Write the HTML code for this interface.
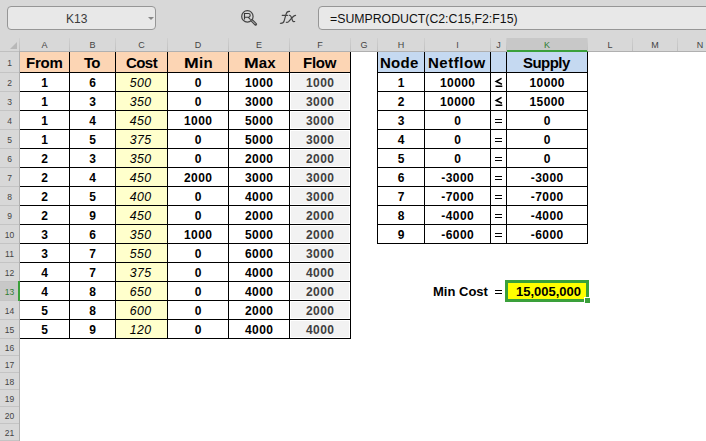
<!DOCTYPE html><html><head><meta charset="utf-8"><style>
*{margin:0;padding:0}
html,body{width:706px;height:441px;overflow:hidden;background:#fff}
body{position:relative;font-family:"Liberation Sans",sans-serif}
.a{position:absolute;text-align:center;white-space:nowrap}
.t{position:absolute;height:40px;line-height:40px;white-space:nowrap}
.dt,.it,.out{text-align:center;font-size:12px;letter-spacing:0.4px;text-indent:0.4px}
.dt{font-weight:bold;color:#000}
.it{font-style:italic;color:#000;font-size:12.3px;text-indent:-1.6px}
.out{font-weight:bold;color:#3f3f3f}
</style></head><body>
<div class="a" style="left:0;top:0;width:706px;height:52px;background:#d8d8d8"></div>
<div class="a" style="left:7px;top:6px;width:147px;height:22px;border:1px solid #969696;border-radius:4px;background:#e8e8e8"></div>
<div class="t" style="left:66px;top:-1px;font-size:12px;color:#3a3a3a">K13</div>
<div class="a" style="left:148px;top:17px;width:0;height:0;border-left:3px solid transparent;border-right:3px solid transparent;border-top:3px solid #888"></div>
<svg class="a" style="left:238px;top:7px" width="22" height="22" viewBox="0 0 22 22"><circle cx="9.4" cy="9.4" r="5.7" fill="none" stroke="#444" stroke-width="1.2"/><path d="M6.5 12.6 V6.5 H10.5 C11.7 6.5 12.2 7.3 12.2 8.3 C12.2 9.4 11.6 10.2 10.5 10.2 H6.5 M10 10.2 L12.6 12.6" fill="none" stroke="#383838" stroke-width="1.15"/><path d="M13.9 13.5 L17.6 17.2" stroke="#444" stroke-width="2.9" stroke-linecap="round"/><path d="M14.2 13.8 L17.3 16.9" stroke="#d0d0d0" stroke-width="0.9" stroke-linecap="round"/></svg>
<svg class="a" style="left:276px;top:8px" width="24" height="18" viewBox="0 0 24 18"><g fill="none" stroke="#444" stroke-width="1.15" stroke-linecap="round"><path d="M13.6 3.4 C11.4 3.1 10.5 4.3 10.0 6.3 L8.1 13.0 C7.6 14.8 6.6 15.4 4.4 15.3"/><path d="M6.2 7.3 H11.5"/><path d="M13.2 7.3 C14.3 7.2 14.7 7.7 15.1 8.8 L16.6 12.8 C17.0 13.7 17.6 13.8 18.7 13.5"/><path d="M19.6 7.3 C18.5 7.3 17.6 8.0 16.3 9.5 L12.6 13.6 C12.0 14.2 11.2 14.4 10.3 14.3"/></g></svg>
<div class="a" style="left:318px;top:6px;width:400px;height:22px;border:1px solid #969696;border-radius:4px;background:#e8e8e8"></div>
<div class="t" style="left:330px;top:-1px;font-size:12.3px;color:#111">=SUMPRODUCT(C2:C15,F2:F15)</div>
<div class="a" style="left:0;top:51px;width:19px;height:1px;background:#c0c0c0"></div>
<div class="a" style="left:19px;top:51px;width:687px;height:1px;background:#b0b0b0"></div>
<div class="a" style="left:0;top:52px;width:19px;height:389px;background:#d8d8d8"></div>
<div class="a" style="left:19px;top:38px;width:1px;height:13px;background:linear-gradient(#d0d0d0,#bcbcbc)"></div>
<div class="a" style="left:19px;top:51px;width:1px;height:390px;background:#b0b0b0"></div>
<svg class="a" style="left:9px;top:41px" width="9" height="9"><path d="M8 1 L8 8 L1 8 Z" fill="#b8b8b8"/></svg>
<div class="a" style="left:507px;top:38px;width:81px;height:12px;background:#c8c8c8"></div>
<div class="a" style="left:507px;top:50px;width:81px;height:2px;background:#3aa03a"></div>
<div class="a" style="left:69px;top:38px;width:1px;height:13px;background:linear-gradient(#d0d0d0,#c0c0c0)"></div>
<div class="a" style="left:20px;top:39px;width:49px;height:13px;line-height:13px;text-align:center;font-size:9px;color:#444">A</div>
<div class="a" style="left:115px;top:38px;width:1px;height:13px;background:linear-gradient(#d0d0d0,#c0c0c0)"></div>
<div class="a" style="left:70px;top:39px;width:45px;height:13px;line-height:13px;text-align:center;font-size:9px;color:#444">B</div>
<div class="a" style="left:167px;top:38px;width:1px;height:13px;background:linear-gradient(#d0d0d0,#c0c0c0)"></div>
<div class="a" style="left:116px;top:39px;width:51px;height:13px;line-height:13px;text-align:center;font-size:9px;color:#444">C</div>
<div class="a" style="left:228px;top:38px;width:1px;height:13px;background:linear-gradient(#d0d0d0,#c0c0c0)"></div>
<div class="a" style="left:168px;top:39px;width:60px;height:13px;line-height:13px;text-align:center;font-size:9px;color:#444">D</div>
<div class="a" style="left:289px;top:38px;width:1px;height:13px;background:linear-gradient(#d0d0d0,#c0c0c0)"></div>
<div class="a" style="left:229px;top:39px;width:60px;height:13px;line-height:13px;text-align:center;font-size:9px;color:#444">E</div>
<div class="a" style="left:350px;top:38px;width:1px;height:13px;background:linear-gradient(#d0d0d0,#c0c0c0)"></div>
<div class="a" style="left:290px;top:39px;width:60px;height:13px;line-height:13px;text-align:center;font-size:9px;color:#444">F</div>
<div class="a" style="left:377px;top:38px;width:1px;height:13px;background:linear-gradient(#d0d0d0,#c0c0c0)"></div>
<div class="a" style="left:351px;top:39px;width:26px;height:13px;line-height:13px;text-align:center;font-size:9px;color:#444">G</div>
<div class="a" style="left:424px;top:38px;width:1px;height:13px;background:linear-gradient(#d0d0d0,#c0c0c0)"></div>
<div class="a" style="left:378px;top:39px;width:46px;height:13px;line-height:13px;text-align:center;font-size:9px;color:#444">H</div>
<div class="a" style="left:490px;top:38px;width:1px;height:13px;background:linear-gradient(#d0d0d0,#c0c0c0)"></div>
<div class="a" style="left:425px;top:39px;width:65px;height:13px;line-height:13px;text-align:center;font-size:9px;color:#444">I</div>
<div class="a" style="left:506px;top:38px;width:1px;height:13px;background:linear-gradient(#d0d0d0,#c0c0c0)"></div>
<div class="a" style="left:491px;top:39px;width:15px;height:13px;line-height:13px;text-align:center;font-size:9px;color:#444">J</div>
<div class="a" style="left:587px;top:38px;width:1px;height:13px;background:linear-gradient(#d0d0d0,#c0c0c0)"></div>
<div class="a" style="left:507px;top:39px;width:80px;height:13px;line-height:13px;text-align:center;font-size:9px;color:#2f7d32">K</div>
<div class="a" style="left:632px;top:38px;width:1px;height:13px;background:linear-gradient(#d0d0d0,#c0c0c0)"></div>
<div class="a" style="left:588px;top:39px;width:44px;height:13px;line-height:13px;text-align:center;font-size:9px;color:#444">L</div>
<div class="a" style="left:677px;top:38px;width:1px;height:13px;background:linear-gradient(#d0d0d0,#c0c0c0)"></div>
<div class="a" style="left:633px;top:39px;width:44px;height:13px;line-height:13px;text-align:center;font-size:9px;color:#444">M</div>
<div class="a" style="left:722px;top:38px;width:1px;height:13px;background:linear-gradient(#d0d0d0,#c0c0c0)"></div>
<div class="a" style="left:678px;top:39px;width:44px;height:13px;line-height:13px;text-align:center;font-size:9px;color:#444">N</div>
<div class="a" style="left:0;top:72px;width:19px;height:1px;background:#c4c4c4"></div>
<div class="a" style="left:0;top:53px;width:19px;height:21px;line-height:21px;text-align:center;font-size:8.5px;color:#444">1</div>
<div class="a" style="left:0;top:91px;width:19px;height:1px;background:#c4c4c4"></div>
<div class="a" style="left:0;top:74px;width:19px;height:19px;line-height:19px;text-align:center;font-size:8.5px;color:#444">2</div>
<div class="a" style="left:0;top:110px;width:19px;height:1px;background:#c4c4c4"></div>
<div class="a" style="left:0;top:93px;width:19px;height:19px;line-height:19px;text-align:center;font-size:8.5px;color:#444">3</div>
<div class="a" style="left:0;top:129px;width:19px;height:1px;background:#c4c4c4"></div>
<div class="a" style="left:0;top:112px;width:19px;height:19px;line-height:19px;text-align:center;font-size:8.5px;color:#444">4</div>
<div class="a" style="left:0;top:148px;width:19px;height:1px;background:#c4c4c4"></div>
<div class="a" style="left:0;top:131px;width:19px;height:19px;line-height:19px;text-align:center;font-size:8.5px;color:#444">5</div>
<div class="a" style="left:0;top:167px;width:19px;height:1px;background:#c4c4c4"></div>
<div class="a" style="left:0;top:150px;width:19px;height:19px;line-height:19px;text-align:center;font-size:8.5px;color:#444">6</div>
<div class="a" style="left:0;top:186px;width:19px;height:1px;background:#c4c4c4"></div>
<div class="a" style="left:0;top:169px;width:19px;height:19px;line-height:19px;text-align:center;font-size:8.5px;color:#444">7</div>
<div class="a" style="left:0;top:205px;width:19px;height:1px;background:#c4c4c4"></div>
<div class="a" style="left:0;top:188px;width:19px;height:19px;line-height:19px;text-align:center;font-size:8.5px;color:#444">8</div>
<div class="a" style="left:0;top:224px;width:19px;height:1px;background:#c4c4c4"></div>
<div class="a" style="left:0;top:207px;width:19px;height:19px;line-height:19px;text-align:center;font-size:8.5px;color:#444">9</div>
<div class="a" style="left:0;top:243px;width:19px;height:1px;background:#c4c4c4"></div>
<div class="a" style="left:0;top:226px;width:19px;height:19px;line-height:19px;text-align:center;font-size:8.5px;color:#444">10</div>
<div class="a" style="left:0;top:262px;width:19px;height:1px;background:#c4c4c4"></div>
<div class="a" style="left:0;top:245px;width:19px;height:19px;line-height:19px;text-align:center;font-size:8.5px;color:#444">11</div>
<div class="a" style="left:0;top:281px;width:19px;height:1px;background:#c4c4c4"></div>
<div class="a" style="left:0;top:264px;width:19px;height:19px;line-height:19px;text-align:center;font-size:8.5px;color:#444">12</div>
<div class="a" style="left:0;top:300px;width:19px;height:1px;background:#c4c4c4"></div>
<div class="a" style="left:0;top:282px;width:19px;height:18px;background:#c8c8c8"></div>
<div class="a" style="left:18px;top:281px;width:2px;height:20px;background:#3aa03a"></div>
<div class="a" style="left:0;top:283px;width:19px;height:19px;line-height:19px;text-align:center;font-size:8.5px;color:#2f7d32">13</div>
<div class="a" style="left:0;top:319px;width:19px;height:1px;background:#c4c4c4"></div>
<div class="a" style="left:0;top:302px;width:19px;height:19px;line-height:19px;text-align:center;font-size:8.5px;color:#444">14</div>
<div class="a" style="left:0;top:338px;width:19px;height:1px;background:#c4c4c4"></div>
<div class="a" style="left:0;top:321px;width:19px;height:19px;line-height:19px;text-align:center;font-size:8.5px;color:#444">15</div>
<div class="a" style="left:0;top:355px;width:19px;height:1px;background:#c4c4c4"></div>
<div class="a" style="left:0;top:340px;width:19px;height:17px;line-height:17px;text-align:center;font-size:8.5px;color:#444">16</div>
<div class="a" style="left:0;top:372px;width:19px;height:1px;background:#c4c4c4"></div>
<div class="a" style="left:0;top:357px;width:19px;height:17px;line-height:17px;text-align:center;font-size:8.5px;color:#444">17</div>
<div class="a" style="left:0;top:389px;width:19px;height:1px;background:#c4c4c4"></div>
<div class="a" style="left:0;top:374px;width:19px;height:17px;line-height:17px;text-align:center;font-size:8.5px;color:#444">18</div>
<div class="a" style="left:0;top:406px;width:19px;height:1px;background:#c4c4c4"></div>
<div class="a" style="left:0;top:391px;width:19px;height:17px;line-height:17px;text-align:center;font-size:8.5px;color:#444">19</div>
<div class="a" style="left:0;top:423px;width:19px;height:1px;background:#c4c4c4"></div>
<div class="a" style="left:0;top:408px;width:19px;height:17px;line-height:17px;text-align:center;font-size:8.5px;color:#444">20</div>
<div class="a" style="left:0;top:440px;width:19px;height:1px;background:#c4c4c4"></div>
<div class="a" style="left:0;top:425px;width:19px;height:17px;line-height:17px;text-align:center;font-size:8.5px;color:#444">21</div>
<div class="a" style="left:0;top:457px;width:19px;height:1px;background:#c4c4c4"></div>
<div class="a" style="left:0;top:442px;width:19px;height:17px;line-height:17px;text-align:center;font-size:8.5px;color:#444">22</div>
<div class="a" style="left:20px;top:52px;width:49px;height:20px;background:#fcd5b4"></div>
<div class="t" style="left:26px;top:43px;font-size:15px;font-weight:bold;letter-spacing:-0.20px;color:#000">From</div>
<div class="a" style="left:70px;top:52px;width:45px;height:20px;background:#fcd5b4"></div>
<div class="t" style="left:84px;top:43px;font-size:15px;font-weight:bold;letter-spacing:-0.70px;color:#000">To</div>
<div class="a" style="left:116px;top:52px;width:51px;height:20px;background:#fcd5b4"></div>
<div class="t" style="left:126px;top:43px;font-size:15px;font-weight:bold;letter-spacing:-0.57px;color:#000">Cost</div>
<div class="a" style="left:168px;top:52px;width:60px;height:20px;background:#fcd5b4"></div>
<div class="t" style="left:184px;top:43px;font-size:15px;font-weight:bold;letter-spacing:0.45px;color:#000"><span style="display:inline-block;transform:scaleX(1.18);transform-origin:0 0;margin-right:2px">M</span>in</div>
<div class="a" style="left:229px;top:52px;width:60px;height:20px;background:#fcd5b4"></div>
<div class="t" style="left:244px;top:43px;font-size:15px;font-weight:bold;letter-spacing:0.15px;color:#000"><span style="display:inline-block;transform:scaleX(1.18);transform-origin:0 0;margin-right:2px">M</span>ax</div>
<div class="a" style="left:290px;top:52px;width:60px;height:20px;background:#fcd5b4"></div>
<div class="t" style="left:303px;top:43px;font-size:15px;font-weight:bold;letter-spacing:-0.23px;color:#000">Flow</div>
<div class="t dt" style="left:20px;top:63px;width:49px">1</div>
<div class="t dt" style="left:70px;top:63px;width:45px">6</div>
<div class="a" style="left:116px;top:73px;width:51px;height:18px;background:#ffffcc"></div>
<div class="t it" style="left:116px;top:63px;width:51px">500</div>
<div class="t dt" style="left:168px;top:63px;width:60px">0</div>
<div class="t dt" style="left:229px;top:63px;width:60px">1000</div>
<div class="a" style="left:291px;top:74px;width:58px;height:16px;background:#f2f2f2"></div>
<div class="t out" style="left:290px;top:63px;width:60px">1000</div>
<div class="t dt" style="left:20px;top:82px;width:49px">1</div>
<div class="t dt" style="left:70px;top:82px;width:45px">3</div>
<div class="a" style="left:116px;top:92px;width:51px;height:18px;background:#ffffcc"></div>
<div class="t it" style="left:116px;top:82px;width:51px">350</div>
<div class="t dt" style="left:168px;top:82px;width:60px">0</div>
<div class="t dt" style="left:229px;top:82px;width:60px">3000</div>
<div class="a" style="left:291px;top:93px;width:58px;height:16px;background:#f2f2f2"></div>
<div class="t out" style="left:290px;top:82px;width:60px">3000</div>
<div class="t dt" style="left:20px;top:101px;width:49px">1</div>
<div class="t dt" style="left:70px;top:101px;width:45px">4</div>
<div class="a" style="left:116px;top:111px;width:51px;height:18px;background:#ffffcc"></div>
<div class="t it" style="left:116px;top:101px;width:51px">450</div>
<div class="t dt" style="left:168px;top:101px;width:60px">1000</div>
<div class="t dt" style="left:229px;top:101px;width:60px">5000</div>
<div class="a" style="left:291px;top:112px;width:58px;height:16px;background:#f2f2f2"></div>
<div class="t out" style="left:290px;top:101px;width:60px">3000</div>
<div class="t dt" style="left:20px;top:120px;width:49px">1</div>
<div class="t dt" style="left:70px;top:120px;width:45px">5</div>
<div class="a" style="left:116px;top:130px;width:51px;height:18px;background:#ffffcc"></div>
<div class="t it" style="left:116px;top:120px;width:51px">375</div>
<div class="t dt" style="left:168px;top:120px;width:60px">0</div>
<div class="t dt" style="left:229px;top:120px;width:60px">5000</div>
<div class="a" style="left:291px;top:131px;width:58px;height:16px;background:#f2f2f2"></div>
<div class="t out" style="left:290px;top:120px;width:60px">3000</div>
<div class="t dt" style="left:20px;top:139px;width:49px">2</div>
<div class="t dt" style="left:70px;top:139px;width:45px">3</div>
<div class="a" style="left:116px;top:149px;width:51px;height:18px;background:#ffffcc"></div>
<div class="t it" style="left:116px;top:139px;width:51px">350</div>
<div class="t dt" style="left:168px;top:139px;width:60px">0</div>
<div class="t dt" style="left:229px;top:139px;width:60px">2000</div>
<div class="a" style="left:291px;top:150px;width:58px;height:16px;background:#f2f2f2"></div>
<div class="t out" style="left:290px;top:139px;width:60px">2000</div>
<div class="t dt" style="left:20px;top:158px;width:49px">2</div>
<div class="t dt" style="left:70px;top:158px;width:45px">4</div>
<div class="a" style="left:116px;top:168px;width:51px;height:18px;background:#ffffcc"></div>
<div class="t it" style="left:116px;top:158px;width:51px">450</div>
<div class="t dt" style="left:168px;top:158px;width:60px">2000</div>
<div class="t dt" style="left:229px;top:158px;width:60px">3000</div>
<div class="a" style="left:291px;top:169px;width:58px;height:16px;background:#f2f2f2"></div>
<div class="t out" style="left:290px;top:158px;width:60px">3000</div>
<div class="t dt" style="left:20px;top:177px;width:49px">2</div>
<div class="t dt" style="left:70px;top:177px;width:45px">5</div>
<div class="a" style="left:116px;top:187px;width:51px;height:18px;background:#ffffcc"></div>
<div class="t it" style="left:116px;top:177px;width:51px">400</div>
<div class="t dt" style="left:168px;top:177px;width:60px">0</div>
<div class="t dt" style="left:229px;top:177px;width:60px">4000</div>
<div class="a" style="left:291px;top:188px;width:58px;height:16px;background:#f2f2f2"></div>
<div class="t out" style="left:290px;top:177px;width:60px">3000</div>
<div class="t dt" style="left:20px;top:196px;width:49px">2</div>
<div class="t dt" style="left:70px;top:196px;width:45px">9</div>
<div class="a" style="left:116px;top:206px;width:51px;height:18px;background:#ffffcc"></div>
<div class="t it" style="left:116px;top:196px;width:51px">450</div>
<div class="t dt" style="left:168px;top:196px;width:60px">0</div>
<div class="t dt" style="left:229px;top:196px;width:60px">2000</div>
<div class="a" style="left:291px;top:207px;width:58px;height:16px;background:#f2f2f2"></div>
<div class="t out" style="left:290px;top:196px;width:60px">2000</div>
<div class="t dt" style="left:20px;top:215px;width:49px">3</div>
<div class="t dt" style="left:70px;top:215px;width:45px">6</div>
<div class="a" style="left:116px;top:225px;width:51px;height:18px;background:#ffffcc"></div>
<div class="t it" style="left:116px;top:215px;width:51px">350</div>
<div class="t dt" style="left:168px;top:215px;width:60px">1000</div>
<div class="t dt" style="left:229px;top:215px;width:60px">5000</div>
<div class="a" style="left:291px;top:226px;width:58px;height:16px;background:#f2f2f2"></div>
<div class="t out" style="left:290px;top:215px;width:60px">2000</div>
<div class="t dt" style="left:20px;top:234px;width:49px">3</div>
<div class="t dt" style="left:70px;top:234px;width:45px">7</div>
<div class="a" style="left:116px;top:244px;width:51px;height:18px;background:#ffffcc"></div>
<div class="t it" style="left:116px;top:234px;width:51px">550</div>
<div class="t dt" style="left:168px;top:234px;width:60px">0</div>
<div class="t dt" style="left:229px;top:234px;width:60px">6000</div>
<div class="a" style="left:291px;top:245px;width:58px;height:16px;background:#f2f2f2"></div>
<div class="t out" style="left:290px;top:234px;width:60px">3000</div>
<div class="t dt" style="left:20px;top:253px;width:49px">4</div>
<div class="t dt" style="left:70px;top:253px;width:45px">7</div>
<div class="a" style="left:116px;top:263px;width:51px;height:18px;background:#ffffcc"></div>
<div class="t it" style="left:116px;top:253px;width:51px">375</div>
<div class="t dt" style="left:168px;top:253px;width:60px">0</div>
<div class="t dt" style="left:229px;top:253px;width:60px">4000</div>
<div class="a" style="left:291px;top:264px;width:58px;height:16px;background:#f2f2f2"></div>
<div class="t out" style="left:290px;top:253px;width:60px">4000</div>
<div class="t dt" style="left:20px;top:272px;width:49px">4</div>
<div class="t dt" style="left:70px;top:272px;width:45px">8</div>
<div class="a" style="left:116px;top:282px;width:51px;height:18px;background:#ffffcc"></div>
<div class="t it" style="left:116px;top:272px;width:51px">650</div>
<div class="t dt" style="left:168px;top:272px;width:60px">0</div>
<div class="t dt" style="left:229px;top:272px;width:60px">4000</div>
<div class="a" style="left:291px;top:283px;width:58px;height:16px;background:#f2f2f2"></div>
<div class="t out" style="left:290px;top:272px;width:60px">2000</div>
<div class="t dt" style="left:20px;top:291px;width:49px">5</div>
<div class="t dt" style="left:70px;top:291px;width:45px">8</div>
<div class="a" style="left:116px;top:301px;width:51px;height:18px;background:#ffffcc"></div>
<div class="t it" style="left:116px;top:291px;width:51px">600</div>
<div class="t dt" style="left:168px;top:291px;width:60px">0</div>
<div class="t dt" style="left:229px;top:291px;width:60px">2000</div>
<div class="a" style="left:291px;top:302px;width:58px;height:16px;background:#f2f2f2"></div>
<div class="t out" style="left:290px;top:291px;width:60px">2000</div>
<div class="t dt" style="left:20px;top:310px;width:49px">5</div>
<div class="t dt" style="left:70px;top:310px;width:45px">9</div>
<div class="a" style="left:116px;top:320px;width:51px;height:18px;background:#ffffcc"></div>
<div class="t it" style="left:116px;top:310px;width:51px">120</div>
<div class="t dt" style="left:168px;top:310px;width:60px">0</div>
<div class="t dt" style="left:229px;top:310px;width:60px">4000</div>
<div class="a" style="left:291px;top:321px;width:58px;height:16px;background:#f2f2f2"></div>
<div class="t out" style="left:290px;top:310px;width:60px">4000</div>
<div class="a" style="left:378px;top:52px;width:46px;height:20px;background:#c5d9f1"></div>
<div class="t" style="left:380px;top:43px;font-size:15px;font-weight:bold;letter-spacing:0.27px;color:#000">Node</div>
<div class="a" style="left:425px;top:52px;width:65px;height:20px;background:#c5d9f1"></div>
<div class="t" style="left:428px;top:43px;font-size:15px;font-weight:bold;letter-spacing:0.52px;color:#000">Netflow</div>
<div class="a" style="left:491px;top:52px;width:15px;height:20px;background:#c5d9f1"></div>
<div class="a" style="left:507px;top:52px;width:80px;height:20px;background:#c5d9f1"></div>
<div class="t" style="left:523px;top:43px;font-size:15px;font-weight:bold;letter-spacing:-0.54px;color:#000">Supply</div>
<div class="t dt" style="left:378px;top:63px;width:46px">1</div>
<div class="t dt" style="left:425px;top:63px;width:65px">10000</div>
<svg class="a" style="left:494px;top:77px" width="10" height="12" viewBox="0 0 10 12"><path d="M7.6 1.3 L2.1 4.5 L7.9 7.3 M1.5 9.3 H8.3" fill="none" stroke="#000" stroke-width="1.5"/></svg>
<div class="t dt" style="left:507px;top:63px;width:80px">10000</div>
<div class="t dt" style="left:378px;top:82px;width:46px">2</div>
<div class="t dt" style="left:425px;top:82px;width:65px">10000</div>
<svg class="a" style="left:494px;top:96px" width="10" height="12" viewBox="0 0 10 12"><path d="M7.6 1.3 L2.1 4.5 L7.9 7.3 M1.5 9.3 H8.3" fill="none" stroke="#000" stroke-width="1.5"/></svg>
<div class="t dt" style="left:507px;top:82px;width:80px">15000</div>
<div class="t dt" style="left:378px;top:101px;width:46px">3</div>
<div class="t dt" style="left:425px;top:101px;width:65px">0</div>
<div class="a" style="left:495px;top:119px;width:7px;height:1px;background:#000"></div>
<div class="a" style="left:495px;top:122px;width:7px;height:1px;background:#000"></div>
<div class="t dt" style="left:507px;top:101px;width:80px">0</div>
<div class="t dt" style="left:378px;top:120px;width:46px">4</div>
<div class="t dt" style="left:425px;top:120px;width:65px">0</div>
<div class="a" style="left:495px;top:138px;width:7px;height:1px;background:#000"></div>
<div class="a" style="left:495px;top:141px;width:7px;height:1px;background:#000"></div>
<div class="t dt" style="left:507px;top:120px;width:80px">0</div>
<div class="t dt" style="left:378px;top:139px;width:46px">5</div>
<div class="t dt" style="left:425px;top:139px;width:65px">0</div>
<div class="a" style="left:495px;top:157px;width:7px;height:1px;background:#000"></div>
<div class="a" style="left:495px;top:160px;width:7px;height:1px;background:#000"></div>
<div class="t dt" style="left:507px;top:139px;width:80px">0</div>
<div class="t dt" style="left:378px;top:158px;width:46px">6</div>
<div class="t dt" style="left:425px;top:158px;width:65px">-3000</div>
<div class="a" style="left:495px;top:176px;width:7px;height:1px;background:#000"></div>
<div class="a" style="left:495px;top:179px;width:7px;height:1px;background:#000"></div>
<div class="t dt" style="left:507px;top:158px;width:80px">-3000</div>
<div class="t dt" style="left:378px;top:177px;width:46px">7</div>
<div class="t dt" style="left:425px;top:177px;width:65px">-7000</div>
<div class="a" style="left:495px;top:195px;width:7px;height:1px;background:#000"></div>
<div class="a" style="left:495px;top:198px;width:7px;height:1px;background:#000"></div>
<div class="t dt" style="left:507px;top:177px;width:80px">-7000</div>
<div class="t dt" style="left:378px;top:196px;width:46px">8</div>
<div class="t dt" style="left:425px;top:196px;width:65px">-4000</div>
<div class="a" style="left:495px;top:214px;width:7px;height:1px;background:#000"></div>
<div class="a" style="left:495px;top:217px;width:7px;height:1px;background:#000"></div>
<div class="t dt" style="left:507px;top:196px;width:80px">-4000</div>
<div class="t dt" style="left:378px;top:215px;width:46px">9</div>
<div class="t dt" style="left:425px;top:215px;width:65px">-6000</div>
<div class="a" style="left:495px;top:233px;width:7px;height:1px;background:#000"></div>
<div class="a" style="left:495px;top:236px;width:7px;height:1px;background:#000"></div>
<div class="t dt" style="left:507px;top:215px;width:80px">-6000</div>
<div class="a" style="left:20px;top:72px;width:331px;height:1px;background:#000"></div>
<div class="a" style="left:20px;top:91px;width:331px;height:1px;background:#000"></div>
<div class="a" style="left:20px;top:110px;width:331px;height:1px;background:#000"></div>
<div class="a" style="left:20px;top:129px;width:331px;height:1px;background:#000"></div>
<div class="a" style="left:20px;top:148px;width:331px;height:1px;background:#000"></div>
<div class="a" style="left:20px;top:167px;width:331px;height:1px;background:#000"></div>
<div class="a" style="left:20px;top:186px;width:331px;height:1px;background:#000"></div>
<div class="a" style="left:20px;top:205px;width:331px;height:1px;background:#000"></div>
<div class="a" style="left:20px;top:224px;width:331px;height:1px;background:#000"></div>
<div class="a" style="left:20px;top:243px;width:331px;height:1px;background:#000"></div>
<div class="a" style="left:20px;top:262px;width:331px;height:1px;background:#000"></div>
<div class="a" style="left:20px;top:281px;width:331px;height:1px;background:#000"></div>
<div class="a" style="left:20px;top:300px;width:331px;height:1px;background:#000"></div>
<div class="a" style="left:20px;top:319px;width:331px;height:1px;background:#000"></div>
<div class="a" style="left:20px;top:338px;width:331px;height:1px;background:#000"></div>
<div class="a" style="left:69px;top:52px;width:1px;height:287px;background:#000"></div>
<div class="a" style="left:115px;top:52px;width:1px;height:287px;background:#000"></div>
<div class="a" style="left:167px;top:52px;width:1px;height:287px;background:#000"></div>
<div class="a" style="left:228px;top:52px;width:1px;height:287px;background:#000"></div>
<div class="a" style="left:289px;top:52px;width:1px;height:287px;background:#000"></div>
<div class="a" style="left:350px;top:52px;width:1px;height:287px;background:#000"></div>
<div class="a" style="left:377px;top:72px;width:211px;height:1px;background:#000"></div>
<div class="a" style="left:377px;top:91px;width:211px;height:1px;background:#000"></div>
<div class="a" style="left:377px;top:110px;width:211px;height:1px;background:#000"></div>
<div class="a" style="left:377px;top:129px;width:211px;height:1px;background:#000"></div>
<div class="a" style="left:377px;top:148px;width:211px;height:1px;background:#000"></div>
<div class="a" style="left:377px;top:167px;width:211px;height:1px;background:#000"></div>
<div class="a" style="left:377px;top:186px;width:211px;height:1px;background:#000"></div>
<div class="a" style="left:377px;top:205px;width:211px;height:1px;background:#000"></div>
<div class="a" style="left:377px;top:224px;width:211px;height:1px;background:#000"></div>
<div class="a" style="left:377px;top:243px;width:211px;height:1px;background:#000"></div>
<div class="a" style="left:377px;top:52px;width:1px;height:192px;background:#000"></div>
<div class="a" style="left:424px;top:52px;width:1px;height:192px;background:#000"></div>
<div class="a" style="left:490px;top:52px;width:1px;height:192px;background:#000"></div>
<div class="a" style="left:506px;top:52px;width:1px;height:192px;background:#000"></div>
<div class="a" style="left:587px;top:52px;width:1px;height:192px;background:#000"></div>
<div class="t" style="left:433px;top:272px;font-size:13px;font-weight:bold;color:#000">Min Cost</div>
<div class="a" style="left:495px;top:290px;width:7px;height:1px;background:#000"></div>
<div class="a" style="left:495px;top:293px;width:7px;height:1px;background:#000"></div>
<div class="a" style="left:508px;top:283px;width:78px;height:16px;background:#ffff00"></div>
<div class="a" style="left:505px;top:280px;width:78px;height:16px;border:3px solid #3aa03a"></div>
<div class="a" style="left:584px;top:297px;width:5px;height:5px;background:#3aa03a;border:1px solid #fff"></div>
<div class="t" style="left:516px;top:272px;font-size:13px;font-weight:bold;color:#000">15,005,000</div>
</body></html>
